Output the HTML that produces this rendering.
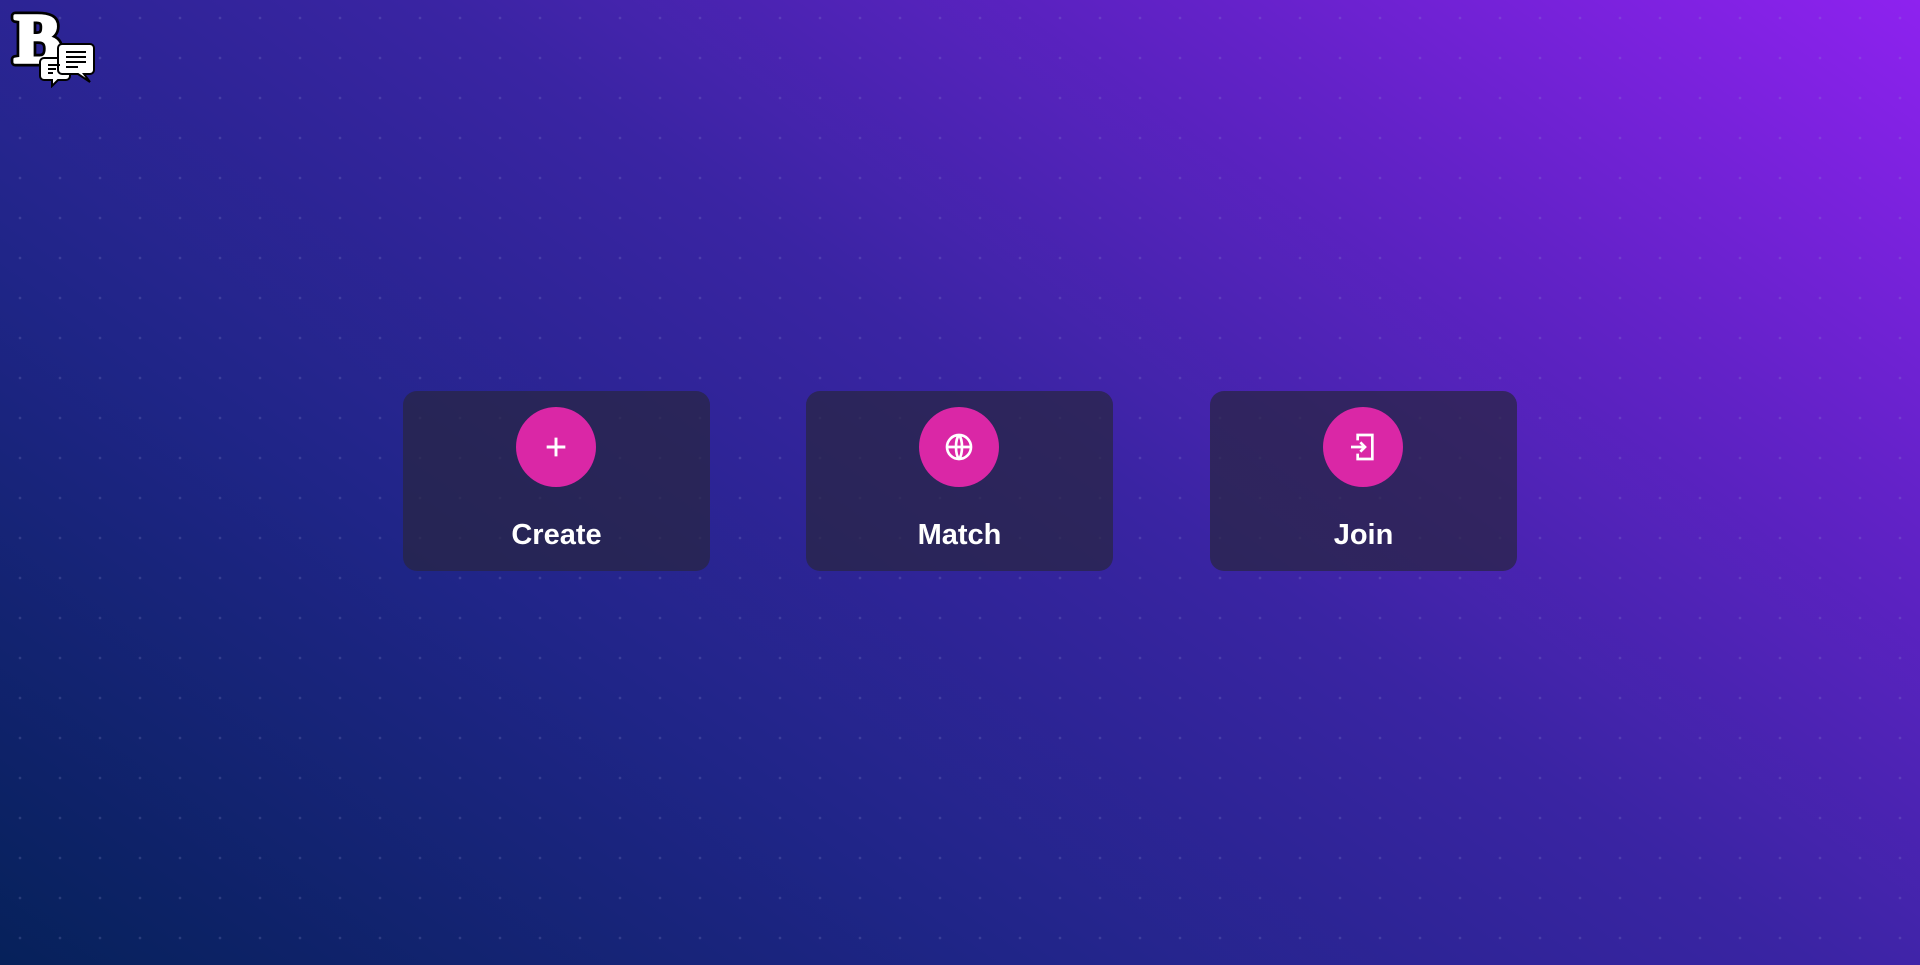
<!DOCTYPE html>
<html><head><meta charset="utf-8"><style>
html,body{margin:0;padding:0;width:1920px;height:965px;overflow:hidden;font-family:"Liberation Sans",sans-serif}
body{background:linear-gradient(35deg,#06215a 0%,#1f2587 30%,#3a24a3 55%,#6322c8 78%,#8e22ef 100%);position:relative}
.dots{position:absolute;inset:0;background-image:radial-gradient(circle,rgba(150,150,210,0.22) 1.1px,transparent 1.6px);background-size:40px 40px;background-position:0px -2px}
.card{position:absolute;top:391px;width:307px;height:180px;border-radius:14px;background:rgba(40,38,65,0.72)}
.circ{position:absolute;left:113px;top:16px;width:80px;height:80px;border-radius:50%;background:#da27a6;display:flex;align-items:center;justify-content:center}
.lbl{position:absolute;left:0;right:0;top:128px;text-align:center;color:#fff;font-weight:bold;font-size:29px}
</style></head><body>
<div class="dots"></div>
<svg style="position:absolute;left:8px;top:2px" width="88" height="86" viewBox="0 0 88 86">
<text x="6" y="60" font-family="Liberation Serif,serif" font-weight="900" font-size="70" fill="#000" stroke="#000" stroke-width="9" stroke-linejoin="round">B</text>
<text x="6" y="60" font-family="Liberation Serif,serif" font-weight="900" font-size="70" fill="#fff" stroke="#fff" stroke-width="3.5" stroke-linejoin="round">B</text>
<g stroke="#000" stroke-width="2" fill="#fff">
<path d="M36 56 h22 a4 4 0 0 1 4 4 v14 a4 4 0 0 1 -4 4 h-8 l-6 6 v-6 h-8 a4 4 0 0 1 -4 -4 v-14 a4 4 0 0 1 4 -4z"/>
<path d="M54 42 h28 a4 4 0 0 1 4 4 v22 a4 4 0 0 1 -4 4 h-6 l6 8 l-12 -8 h-16 a4 4 0 0 1 -4 -4 v-22 a4 4 0 0 1 4 -4z"/>
</g>
<g stroke="#000" stroke-width="2">
<path d="M40 63h12M40 67h8M40 71h5M58 50h20M58 55h20M58 60h20M58 65h12"/>
</g>
</svg>
<div class="card" style="left:403px"><div class="circ"><svg width="32" height="32" viewBox="0 0 24 24" fill="none" stroke="#fff" stroke-width="2.2"><path d="M12 5v14M5 12h14"/></svg></div><div class="lbl">Create</div></div>
<div class="card" style="left:806px"><div class="circ"><svg width="32" height="32" viewBox="0 0 24 24" fill="none" stroke="#fff" stroke-width="2"><circle cx="12" cy="12" r="9"/><path d="M3 12h18M12 3c-3 3.5-3 14.5 0 18M12 3c3 3.5 3 14.5 0 18"/></svg></div><div class="lbl">Match</div></div>
<div class="card" style="left:1210px"><div class="circ"><svg width="32" height="32" viewBox="0 0 24 24" fill="none" stroke="#fff" stroke-width="2"><path d="M8 7V3h11v18H8v-4"/><path d="M3 12h10M10 8.5l3.5 3.5-3.5 3.5" /></svg></div><div class="lbl">Join</div></div>
</body></html>
